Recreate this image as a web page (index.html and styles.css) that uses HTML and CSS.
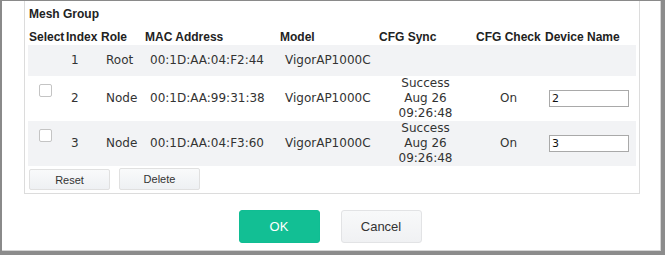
FILE: index.html
```html
<!DOCTYPE html>
<html lang="en">
<head>
  <meta charset="UTF-8">
  <title>Mesh Group</title>
  <link rel="stylesheet" href="styles.css">
</head>
<body>
  <div class="window">
    <section class="panel">
      <h2 class="panel-title">Mesh Group</h2>
      <table class="mesh-table">
        <colgroup>
          <col class="c-select">
          <col class="c-index">
          <col class="c-role">
          <col class="c-mac">
          <col class="c-model">
          <col class="c-sync">
          <col class="c-check">
          <col class="c-name">
        </colgroup>
        <thead>
          <tr>
            <th>Select</th>
            <th>Index</th>
            <th>Role</th>
            <th>MAC Address</th>
            <th>Model</th>
            <th>CFG Sync</th>
            <th>CFG Check</th>
            <th>Device Name</th>
          </tr>
        </thead>
        <tbody>
          <tr class="row-root">
            <td></td>
            <td>1</td>
            <td>Root</td>
            <td>00:1D:AA:04:F2:44</td>
            <td>VigorAP1000C</td>
            <td class="center"></td>
            <td class="center"></td>
            <td></td>
          </tr>
          <tr class="row-node">
            <td class="select"><span class="checkbox"></span></td>
            <td>2</td>
            <td>Node</td>
            <td>00:1D:AA:99:31:38</td>
            <td>VigorAP1000C</td>
            <td class="center">Success<br>Aug 26<br>09:26:48</td>
            <td class="center">On</td>
            <td class="name"><input type="text" class="name-input" value="2"></td>
          </tr>
          <tr class="row-node">
            <td class="select"><span class="checkbox"></span></td>
            <td>3</td>
            <td>Node</td>
            <td>00:1D:AA:04:F3:60</td>
            <td>VigorAP1000C</td>
            <td class="center">Success<br>Aug 26<br>09:26:48</td>
            <td class="center">On</td>
            <td class="name"><input type="text" class="name-input" value="3"></td>
          </tr>
        </tbody>
      </table>
      <div class="table-actions">
        <button type="button" class="btn-small">Reset</button>
        <button type="button" class="btn-small btn-delete">Delete</button>
      </div>
    </section>

    <div class="dialog-actions">
      <button type="button" class="btn btn-ok">OK</button>
      <button type="button" class="btn btn-cancel">Cancel</button>
    </div>
  </div>
</body>
</html>
```

FILE: styles.css
```css
html, body {
  margin: 0;
  padding: 0;
  background-color: #fff;
}

.window {
  box-sizing: border-box;
  width: 665px;
  height: 255px;
  border-top: 1px solid #8a8a8a;
  border-left: 2px solid #8a8a8a;
  border-right: 4px solid #8c8c8c;
  border-bottom: 4px solid #8c8c8c;
  box-shadow: inset -1px -1px 0 #d4d4d4;
  overflow: hidden;
  font-family: "DejaVu Sans", Verdana, sans-serif;
  color: #333;
}

.panel {
  box-sizing: border-box;
  width: 616px;
  margin-left: 22px;
  margin-top: -1px;
  padding: 6px 3px 3px 3px;
  border: 1px solid #dcdcdc;
  border-top: none;
}

.panel-title {
  margin: 0 0 0 1px;
  font-family: "Liberation Sans", Arial, sans-serif;
  font-size: 12px;
  font-weight: bold;
  line-height: 16px;
  color: #222;
}

.mesh-table {
  border-collapse: collapse;
  table-layout: fixed;
  width: 608px;
}

.c-select { width: 36px; }
.c-index { width: 35px; }
.c-role { width: 44px; }
.c-mac { width: 135px; }
.c-model { width: 99px; }
.c-sync { width: 97px; }
.c-check { width: 69px; }
.c-name { width: 93px; }

.mesh-table th {
  height: 22px;
  padding: 0 0 1px 2px;
  text-align: left;
  vertical-align: bottom;
  white-space: nowrap;
  font-family: "Liberation Sans", Arial, sans-serif;
  font-size: 12px;
  font-weight: bold;
  line-height: 14px;
  color: #222;
}

.mesh-table th:first-child {
  padding-left: 1px;
}

.mesh-table td {
  padding: 0 0 0 7px;
  font-size: 12px;
  line-height: 15px;
  white-space: nowrap;
  vertical-align: middle;
}

.mesh-table td.center {
  padding-left: 0;
  text-align: center;
}

.mesh-table td.select {
  vertical-align: top;
  padding: 0 0 0 11px;
}

.mesh-table td.name {
  padding-left: 6px;
}

.row-root td {
  height: 31px;
  background-color: #f2f3f5;
}

.row-node td {
  height: 45px;
}

.row-node:nth-child(odd) td {
  background-color: #f2f3f5;
}

.checkbox {
  display: block;
  box-sizing: border-box;
  width: 13px;
  height: 13px;
  margin-top: 8px;
  border: 1px solid #c4c4c4;
  border-radius: 2px;
  background-color: #fff;
}

.name-input {
  box-sizing: border-box;
  display: block;
  width: 80px;
  height: 17px;
  margin: 0;
  padding: 0 2px;
  border: 1px solid #a9a9a9;
  font-family: "DejaVu Sans", Verdana, sans-serif;
  font-size: 11px;
  color: #111;
  background-color: #fff;
}

.table-actions {
  display: flex;
  gap: 9px;
  margin-top: 2px;
  margin-left: 1px;
}

.btn-small {
  box-sizing: border-box;
  width: 81px;
  height: 22px;
  padding: 0;
  border: 1px solid #e0e0e0;
  border-radius: 2px;
  background: linear-gradient(#f9fafb, #eef0f3);
  font-family: "Liberation Sans", Arial, sans-serif;
  font-size: 11px;
  color: #333;
}

.btn-small:first-child {
  margin-top: 1px;
  height: 21px;
}

.dialog-actions {
  display: flex;
  justify-content: center;
  gap: 21px;
  margin-top: 16px;
  padding-right: 3px;
}

.btn {
  box-sizing: border-box;
  width: 81px;
  height: 33px;
  padding: 0;
  border-radius: 3px;
  font-family: "Liberation Sans", Arial, sans-serif;
  font-size: 13px;
}

.btn-ok {
  border: 1px solid #10bd93;
  background-color: #12bf94;
  color: #fff;
}

.btn-cancel {
  border: 1px solid #e2e3e5;
  background: linear-gradient(#f8f9fa, #f0f1f3);
  color: #333;
}
```
